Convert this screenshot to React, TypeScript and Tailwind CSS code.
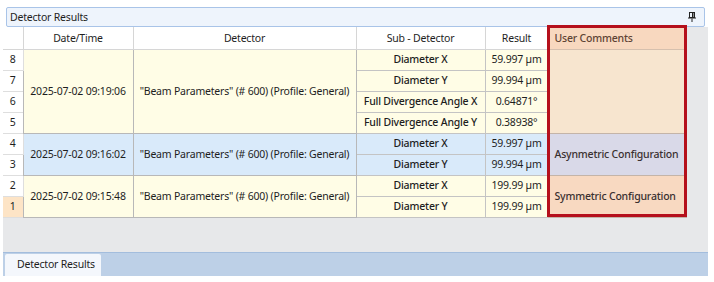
import React from "react";

type Row = {
  n: number;
  sub: string;
  res: string;
};

const groups = [
  {
    date: "2025-07-02 09:19:06",
    bg: "bg-[#fffde6]",
    comment: "",
    cbg: "bg-[#f7e5cf]",
    rows: [
      { n: 8, sub: "Diameter X", res: "59.997 µm" },
      { n: 7, sub: "Diameter Y", res: "99.994 µm" },
      { n: 6, sub: "Full Divergence Angle X", res: "0.64871°" },
      { n: 5, sub: "Full Divergence Angle Y", res: "0.38938°" },
    ] as Row[],
  },
  {
    date: "2025-07-02 09:16:02",
    bg: "bg-[#d9eafa]",
    comment: "Asynmetric Configuration",
    cbg: "bg-[#d9d9e8]",
    rows: [
      { n: 4, sub: "Diameter X", res: "59.997 µm" },
      { n: 3, sub: "Diameter Y", res: "99.994 µm" },
    ] as Row[],
  },
  {
    date: "2025-07-02 09:15:48",
    bg: "bg-[#fffde6]",
    comment: "Symmetric Configuration",
    cbg: "bg-[#f8d9c1]",
    rows: [
      { n: 2, sub: "Diameter X", res: "199.99 µm" },
      { n: 1, sub: "Diameter Y", res: "199.99 µm" },
    ] as Row[],
  },
];

function PinIcon() {
  return (
    <svg width="8" height="10" viewBox="0 0 8 10" className="block">
      <rect x="1.5" y="0.5" width="5" height="5" fill="none" stroke="#222" strokeWidth="1" />
      <rect x="4" y="1" width="1.5" height="4.5" fill="#222" />
      <rect x="0" y="5.5" width="8" height="1" fill="#222" />
      <rect x="3.5" y="6.5" width="1" height="3.5" fill="#222" />
    </svg>
  );
}

export default function App() {
  return (
    <div className="w-[714px] h-[282px] bg-white font-['Noto_Sans',sans-serif] text-[10.5px] tracking-[-0.2px] text-[#1e1e1e] overflow-hidden">
      <div className="pt-[7px] pl-[6px] pr-[9px]">
        <div className="h-[20px] border border-[#a9c4e8] bg-[#eef4fc] rounded-[2px] flex items-center justify-between pl-[3px] pr-[8px]">
          <span className="leading-none text-[#1e1e1e] whitespace-nowrap">Detector Results</span>
          <PinIcon />
        </div>
      </div>

      <div className="ml-[3px] w-[705px] h-[225px] bg-[#e7e8ea] relative">
        <table className="border-collapse table-fixed w-[683px] leading-none whitespace-nowrap">
          <colgroup>
            <col className="w-[20px]" />
            <col className="w-[110px]" />
            <col className="w-[223px]" />
            <col className="w-[129px]" />
            <col className="w-[63px]" />
            <col className="w-[138px]" />
          </colgroup>
          <thead>
            <tr className="h-[22px]">
              <th className="bg-white border-b border-r border-[#d6d6d6] p-0"></th>
              <th className="bg-white border-b border-r border-[#d6d6d6] font-normal p-0 text-center">Date/Time</th>
              <th className="bg-white border-b border-r border-[#d6d6d6] font-normal p-0 text-center">Detector</th>
              <th className="bg-white border-b border-r border-[#d6d6d6] font-normal p-0 text-center">Sub - Detector</th>
              <th className="bg-white border-b border-r border-[#d6d6d6] font-normal p-0 text-center">Result</th>
              <th className="bg-[#f8d8bf] border-b border-[#d6c0ae] font-medium p-0 pl-[6px] text-left text-[#5e4334]">User Comments</th>
            </tr>
          </thead>
          <tbody>
            {groups.map((g, gi) =>
              g.rows.map((r, ri) => {
                const first = ri === 0;
                const groupTop = first && gi > 0 ? "border-t-[#a8a8a8]" : "";
                return (
                  <tr key={r.n} className="h-[21px]">
                    <td
                      className={`p-0 text-center border-b border-r border-[#dedede] ${
                        r.n === 1 ? "bg-[#fde4c6]" : "bg-white"
                      }`}
                    >
                      {r.n}
                    </td>
                    {first && (
                      <>
                        <td
                          rowSpan={g.rows.length}
                          className={`p-0 text-center border border-[#b8b8b8] ${groupTop} ${g.bg}`}
                        >
                          {g.date}
                        </td>
                        <td
                          rowSpan={g.rows.length}
                          className={`p-0 text-center border border-[#b8b8b8] ${groupTop} ${g.bg}`}
                        >
                          "Beam Parameters" (# 600) (Profile: General)
                        </td>
                      </>
                    )}
                    <td
                      className={`p-0 text-center font-medium border border-[#c4c4c4] ${groupTop} ${g.bg}`}
                    >
                      {r.sub}
                    </td>
                    <td className={`p-0 text-center border border-[#c4c4c4] ${groupTop} ${g.bg}`}>{r.res}</td>
                    {first && (
                      <td
                        rowSpan={g.rows.length}
                        className={`p-0 pl-[6px] text-left font-medium text-[#3a3030] border border-[#c4b4a8] ${groupTop} ${g.cbg}`}
                      >
                        {g.comment}
                      </td>
                    )}
                  </tr>
                );
              })
            )}
          </tbody>
        </table>
        <div className="absolute left-[544px] top-[-2px] w-[140px] h-[192px] border-[3px] border-[#b5101c] pointer-events-none"></div>
      </div>

      <div className="ml-[3px] w-[705px] h-[24px] bg-[#bdd0e7] border-t border-[#a3bddd] flex items-end pl-[2px]">
        <div className="h-[22px] w-[96px] bg-[#f4f7fc] rounded-t-[2px] flex items-center pl-[12px] whitespace-nowrap">
          Detector Results
        </div>
      </div>
    </div>
  );
}
